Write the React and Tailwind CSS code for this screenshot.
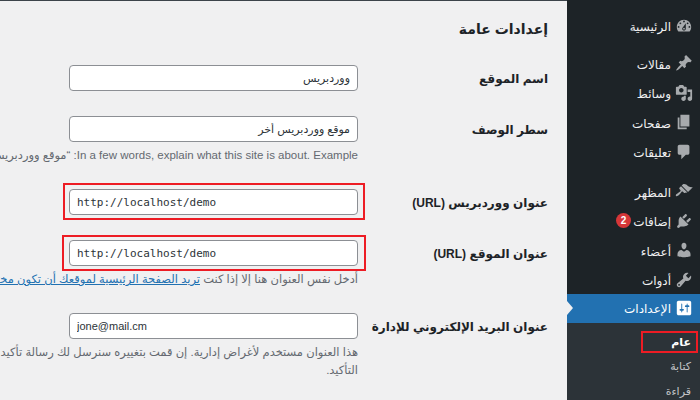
const ICONS = {
  dashboard: 'M3.76 16h12.48c1.1-1.37 1.76-3.11 1.76-5 0-4.42-3.58-8-8-8s-8 3.58-8 8c0 1.89.66 3.63 1.76 5zM10 4c.55 0 1 .45 1 1s-.45 1-1 1-1-.45-1-1 .45-1 1-1zM6 6c.55 0 1 .45 1 1s-.45 1-1 1-1-.45-1-1 .45-1 1-1zm8 0c.55 0 1 .45 1 1s-.45 1-1 1-1-.45-1-1 .45-1 1-1zm-5.37 5.55L12 7v6c0 1.1-.9 2-2 2s-2-.9-2-2c0-.57.24-1.08.63-1.45zM4 10c.55 0 1 .45 1 1s-.45 1-1 1-1-.45-1-1 .45-1 1-1zm12 0c.55 0 1 .45 1 1s-.45 1-1 1-1-.45-1-1 .45-1 1-1zm-5 3c0-.55-.45-1-1-1s-1 .45-1 1 .45 1 1 1 1-.45 1-1z',
  post: 'M10.44 3.02l1.82-1.82 6.36 6.35-1.83 1.82c-1.05-.68-2.48-.57-3.41.36l-.75.75c-.92.93-1.04 2.35-.35 3.41l-1.83 1.82-2.41-2.41-2.8 2.79c-.42.42-3.38 2.71-3.8 2.29s1.86-3.39 2.28-3.81l2.79-2.79L4.1 9.36l1.83-1.82c1.05.69 2.48.57 3.4-.36l.75-.75c.93-.92 1.05-2.35.36-3.41z',
  media: 'M13 11V4c0-.55-.45-1-1-1h-1.67L9 1H5L3.67 3H2c-.55 0-1 .45-1 1v7c0 .55.45 1 1 1h10c.55 0 1-.45 1-1zM7 4.5c1.38 0 2.5 1.12 2.5 2.5S8.38 9.5 7 9.5 4.5 8.38 4.5 7 5.62 4.5 7 4.5zM14 6h5v10.5c0 1.38-1.12 2.5-2.5 2.5S14 17.88 14 16.5s1.12-2.5 2.5-2.5c.17 0 .34.02.5.05V9h-3V6zm-4 8.05V13h2v3.5c0 1.38-1.12 2.5-2.5 2.5S7 17.88 7 16.5 8.12 14 9.5 14c.17 0 .34.02.5.05z',
  page: 'M6 15V2h10v13H6zm-1 1h8v2H3V5h2v11z',
  comments: 'M5 2h9c1.1 0 2 .9 2 2v7c0 1.1-.9 2-2 2h-2l-5 5v-5H5c-1.1 0-2-.9-2-2V4c0-1.1.9-2 2-2z',
  appearance: 'M14.48 11.06L7.41 3.99l1.5-1.5c.5-.56 2.3-.47 3.51.32 1.21.8 1.43 1.28 2.91 2.1 1.18.64 2.45 1.26 4.45.85zm-.71.71L6.7 4.7 4.93 6.47c-.39.39-.39 1.02 0 1.41l1.06 1.06c.39.39.39 1.03 0 1.42-.6.6-1.43 1.11-2.21 1.69-.35.26-.7.53-1.01.84C1.43 13.23.4 14.95 1.1 15.66c.7.7 2.43-.33 3.77-1.67.31-.31.58-.66.85-1.01.57-.78 1.08-1.61 1.68-2.21.39-.39 1.02-.39 1.41 0l1.06 1.06c.39.39 1.02.39 1.41 0z',
  plugins: 'M13.11 4.36L9.87 7.6 8 5.73l3.24-3.24c.35-.34 1.05-.2 1.56.32.52.51.66 1.21.31 1.55zm-8 1.77l.91-1.12 9.01 9.01-1.19.84c-.71.71-2.63 1.16-3.82 1.16H6.14L4.9 17.26c-.59.59-1.54.59-2.12 0-.59-.58-.59-1.53 0-2.12l1.24-1.24v-3.88c0-1.13.4-3.19 1.09-3.89zm7.26 3.97l3.24-3.24c.34-.35 1.04-.21 1.55.31.52.51.66 1.21.31 1.55l-3.24 3.25z',
  users: 'M10 9.25c-2.27 0-2.73-3.44-2.73-3.44C7 4.02 7.82 2 9.97 2c2.16 0 2.98 2.02 2.71 3.81 0 0-.41 3.44-2.68 3.44zm0 2.57L12.72 10c2.39 0 4.52 2.33 4.52 4.53v2.49s-3.65 1.13-7.24 1.13c-3.65 0-7.24-1.13-7.24-1.13v-2.49c0-2.25 1.94-4.48 4.47-4.48z',
  tools: 'M16.68 9.77c-1.34 1.34-3.3 1.67-4.95.99l-5.41 6.52c-.99.99-2.59.99-3.58 0s-.99-2.59 0-3.57l6.52-5.42c-.68-1.65-.35-3.61.99-4.95 1.28-1.28 3.12-1.62 4.72-1.06l-2.89 2.89 2.82 2.82 2.86-2.87c.53 1.58.18 3.39-1.08 4.65zM3.81 16.21c.4.39 1.04.39 1.43 0 .4-.4.4-1.04 0-1.43-.39-.4-1.03-.4-1.43 0-.39.39-.39 1.03 0 1.43z',
  settings: 'M18 16V4c0-1.1-.9-2-2-2H4c-1.1 0-2 .9-2 2v12c0 1.1.9 2 2 2h12c1.1 0 2-.9 2-2zM8 11h1c.55 0 1 .45 1 1s-.45 1-1 1H8v1.5c0 .28-.22.5-.5.5s-.5-.22-.5-.5V13H6c-.55 0-1-.45-1-1s.45-1 1-1h1V5.5c0-.28.22-.5.5-.5s.5.22.5.5V11zm5-2h-1c-.55 0-1-.45-1-1s.45-1 1-1h1V5.5c0-.28.22-.5.5-.5s.5.22.5.5V7h1c.55 0 1 .45 1 1s-.45 1-1 1h-1v5.5c0 .28-.22.5-.5.5s-.5-.22-.5-.5V9z',
};

function MenuItem({ icon, label, badge, className = '' }) {
  return (
    <div className={`flex h-[29.5px] items-center text-[12px] text-[#f0f0f1] ${className}`}>
      <div className="flex w-[29px] shrink-0 justify-end pl-[4px]">
        <svg viewBox="0 0 20 20" className="h-[18px] w-[18px] fill-[#a7aaad]">
          <path d={ICONS[icon]} />
        </svg>
      </div>
      <span className="pt-[3px]">{label}</span>
      {badge && (
        <span className="mr-[2px] flex h-[15px] w-[15px] items-center justify-center rounded-full bg-[#d63638] text-[10px] font-bold text-white">
          {badge}
        </span>
      )}
    </div>
  );
}

function Sidebar() {
  return (
    <aside className="w-[133px] shrink-0 overflow-hidden bg-[#1d2327] pt-[11px]">
      <MenuItem icon="dashboard" label="الرئيسية" />
      <MenuItem icon="post" label="مقالات" className="mt-[8px]" />
      <MenuItem icon="media" label="وسائط" />
      <MenuItem icon="page" label="صفحات" />
      <MenuItem icon="comments" label="تعليقات" />
      <MenuItem icon="appearance" label="المظهر" className="mt-[10px]" />
      <MenuItem icon="plugins" label="إضافات" badge="2" />
      <MenuItem icon="users" label="أعضاء" />
      <MenuItem icon="tools" label="أدوات" />

      {/* Current menu */}
      <div className="relative -mt-px flex h-[29px] items-center bg-[#2271b1] text-[12px] text-white">
        <div className="flex w-[29px] shrink-0 justify-end pl-[4px]">
          <svg viewBox="0 0 20 20" className="h-[18px] w-[18px] fill-white">
            <path d={ICONS.settings} />
          </svg>
        </div>
        <span className="pt-[2px]">الإعدادات</span>
        <div className="absolute left-0 top-1/2 -translate-y-1/2 border-y-[7px] border-l-[6px] border-y-transparent border-l-[#f0f0f1]" />
      </div>
      <div className="h-[77px] bg-[#2c3338] pr-[9px] pt-[7px] text-[11px] text-[#c3c4c7]">
        <div className="relative flex h-[24.5px] items-center text-[11px] font-bold text-white">
          عام
          <div className="absolute -right-[7px] left-[74px] top-[1px] h-[22px] border-2 border-[#ed1c24]" />
        </div>
        <div className="flex h-[24.5px] items-center">كتابة</div>
        <div className="flex h-[24.5px] items-center">قراءة</div>
      </div>
    </aside>
  );
}

function Field({ value, ltr, mono, boxed }) {
  return (
    <div className="relative">
      <input
        readOnly
        value={value}
        dir={ltr ? 'ltr' : 'rtl'}
        className={`block h-[26px] w-[289px] rounded-[4px] border border-[#8c8f94] bg-white px-[7px] text-[11px] text-[#2c3338] outline-none ${mono ? "font-['DejaVu_Sans_Mono',monospace]" : ''}`}
      />
      {boxed === 1 && <div className="absolute -bottom-[5px] -left-[6px] -right-[7px] -top-[6px] border-2 border-[#ed1c24]" />}
      {boxed === 2 && <div className="absolute -bottom-[5px] -left-[7px] -right-[8px] -top-[5px] border-2 border-[#ed1c24]" />}
    </div>
  );
}

function Row({ label, className = '', children }) {
  return (
    <div className={`flex ${className}`}>
      <div className="flex h-[26px] w-[190px] shrink-0 items-center whitespace-nowrap pt-[1px] text-[12px] font-bold text-[#1d2327]">
        {label}
      </div>
      <div className="w-[289px] shrink-0">{children}</div>
    </div>
  );
}

function Description({ children }) {
  return <p className="mt-[4px] whitespace-nowrap text-[11.5px] leading-[18px] text-[#646970]">{children}</p>;
}

export default function App() {
  return (
    <div dir="rtl" className="flex h-[400px] w-[700px] overflow-hidden bg-[#f0f0f1] font-['Liberation_Sans','DejaVu_Sans',sans-serif]">
      <Sidebar />
      <main className="min-w-0 flex-1 overflow-hidden border-t border-[#3c434a] pr-[19px] pt-[18px]">
        <h1 className="h-[20px] text-[14px] font-bold leading-[20px] text-[#1d2327]">إعدادات عامة</h1>

        <Row label="اسم الموقع" className="mt-[26px]">
          <Field value="ووردبريس" />
        </Row>
        <Row label="سطر الوصف" className="mt-[25px]">
          <Field value="موقع ووردبريس أخر" />
          <Description>In a few words, explain what this site is about. Example: “موقع ووردبريس آخر.”</Description>
        </Row>
        <Row label="عنوان ووردبريس (URL)" className="mt-[25px]">
          <Field value="http://localhost/demo" ltr mono boxed={1} />
        </Row>
        <Row label="عنوان الموقع (URL)" className="mt-[25px]">
          <Field value="http://localhost/demo" ltr mono boxed={2} />
          <Description>
            أدخل نفس العنوان هنا إلا إذا كنت{' '}
            <a className="text-[#2271b1] underline">تريد الصفحة الرئيسية لموقعك أن تكون مختلفة عن مسار تنصيب ووردبريس</a>
          </Description>
        </Row>
        <Row label="عنوان البريد الإلكتروني للإدارة" className="mt-[25px]">
          <Field value="jone@mail.cm" ltr />
          <Description>
            هذا العنوان مستخدم لأغراض إدارية. إن قمت بتغييره سنرسل لك رسالة تأكيد على العنوان الجديد.
            <br />
            التأكيد.
          </Description>
        </Row>
      </main>
    </div>
  );
}
